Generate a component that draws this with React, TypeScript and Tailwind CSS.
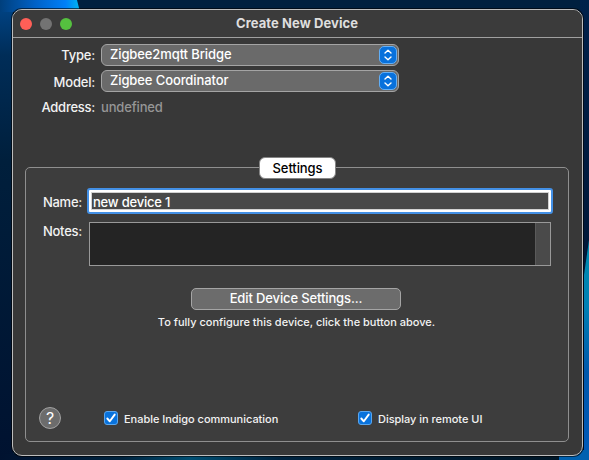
import React from 'react';

function Wallpaper() {
  return (
    <svg className="absolute inset-0" width="589" height="460" viewBox="0 0 589 460" aria-hidden="true">
      <defs>
        <linearGradient id="left" x1="0" y1="0" x2="0" y2="1">
          <stop offset="0" stopColor="#00468a" />
          <stop offset="0.12" stopColor="#002d58" />
          <stop offset="0.35" stopColor="#001f3c" />
          <stop offset="1" stopColor="#001230" />
        </linearGradient>
        <linearGradient id="top" x1="0" y1="0" x2="1" y2="0">
          <stop offset="0" stopColor="#003f7c" />
          <stop offset="0.45" stopColor="#0062c8" />
          <stop offset="0.82" stopColor="#0080f8" />
          <stop offset="1" stopColor="#00b8f0" />
        </linearGradient>
        <linearGradient id="right" x1="0" y1="0" x2="0" y2="1">
          <stop offset="0" stopColor="#00214b" />
          <stop offset="0.6" stopColor="#001737" />
          <stop offset="1" stopColor="#001230" />
        </linearGradient>
        <linearGradient id="wave" x1="0" y1="0" x2="0" y2="1">
          <stop offset="0" stopColor="#008cae" />
          <stop offset="0.3" stopColor="#0080b4" />
          <stop offset="0.6" stopColor="#0058ac" />
          <stop offset="1" stopColor="#0059b8" />
        </linearGradient>
        <linearGradient id="bottom" x1="0" y1="0" x2="1" y2="0">
          <stop offset="0" stopColor="#001230" />
          <stop offset="0.22" stopColor="#00243f" />
          <stop offset="0.34" stopColor="#004f73" />
          <stop offset="0.5" stopColor="#002440" />
          <stop offset="1" stopColor="#001728" />
        </linearGradient>
      </defs>
      <rect width="589" height="460" fill="#00203f" />
      <rect width="13" height="460" fill="url(#left)" />
      <rect x="80" width="509" height="12" fill="#00203f" />
      <path d="M0 0H77L80 12H0Z" fill="url(#top)" />
      <rect x="580" width="9" height="460" fill="url(#right)" />
      <path d="M589 240L584 275V460H589Z" fill="url(#wave)" />
      <rect y="454" width="560" height="6" fill="url(#bottom)" />
      <path d="M559 460V450H589V460Z" fill="#0061b0" />
    </svg>
  );
}

function Select({ value }: { value: string }) {
  return (
    <button className="flex h-[22px] w-[298px] items-center justify-between rounded-[6px] border border-[#a4a4a4] bg-[#6a6a6a] pr-px pl-2 text-left text-white">
      <span className="-mt-0.5 tracking-[-0.1px]">{value}</span>
      <span className="flex h-[18px] w-[18px] items-center justify-center rounded-[5px] border border-[#62aef5] bg-[#0871dc]">
        <svg width="10" height="12" viewBox="0 0 10 12" fill="none" stroke="white" strokeWidth="1.4" strokeLinecap="round" strokeLinejoin="round">
          <path d="M2 4L5 1.2L8 4M2 8L5 10.8L8 8" />
        </svg>
      </span>
    </button>
  );
}

function Check({ label, className }: { label: string; className: string }) {
  return (
    <label className={'flex items-center gap-1.5 text-[11px] whitespace-nowrap ' + className}>
      <span className="flex h-[14px] w-[14px] items-center justify-center rounded-[3px] border border-[#5aa6ee] bg-[#0872dc]">
        <svg width="12" height="12" viewBox="0 0 12 12" fill="none" stroke="white" strokeWidth="1.9" strokeLinecap="round" strokeLinejoin="round">
          <path d="M2.3 6.5L4.8 9.3L9.7 2.6" />
        </svg>
      </span>
      <span className="pt-0.5 tracking-[-0.03px]">{label}</span>
    </label>
  );
}

export default function App() {
  return (
    <div className="relative h-[460px] w-[589px] overflow-hidden pt-[9px] pl-[12px] font-['Inter','Liberation_Sans',sans-serif] text-[13px] leading-[16px] font-medium text-[#f2f2f2]">
      <Wallpaper />
      <main className="relative h-[447px] w-[571px] rounded-[10px] border border-[#bdbdbd] bg-[#383838] shadow-[0_0_0_1px_#00000099]">
        <header className="flex h-[28px] items-center rounded-t-[9px] border-b border-[#a0a0a0] bg-[#3b3b3b] pl-[7px]">
          <div className="flex w-[216px] gap-2">
            <i className="h-3 w-3 rounded-full bg-[#ff5f57]" />
            <i className="h-3 w-3 rounded-full bg-[#737373]" />
            <i className="h-3 w-3 rounded-full bg-[#55c13f]" />
          </div>
          <h1 className="-mt-px text-[13px] font-bold tracking-[0.08px] text-[#dedede]">Create New Device</h1>
        </header>

        <section className="flex h-[129px] flex-col pt-[6px]">
          <div className="flex h-[26px] items-start">
            <span className="mt-[3px] mr-[6px] w-[82px] text-right tracking-[-0.2px]">Type:</span>
            <Select value="Zigbee2mqtt Bridge" />
          </div>
          <div className="flex h-[26px] items-start">
            <span className="mt-[4px] mr-[6px] w-[82px] text-right tracking-[-0.2px]">Model:</span>
            <Select value="Zigbee Coordinator" />
          </div>
          <div className="mt-[3px] flex h-4">
            <span className="mr-[6px] w-[82px] text-right tracking-[-0.25px]">Address:</span>
            <span className="tracking-[-0.15px] text-[#969696]">undefined</span>
          </div>
        </section>

        <section className="ml-[12px] h-[275px] w-[544px] rounded-[5px] border border-[#8f8f8f] bg-[#3d3d3d]">
          <div className="-mt-[11px] ml-[233px] flex h-[22px] w-[77px] items-center justify-center rounded-[6px] border border-[#858585] bg-white text-black">
            <span className="-mt-px tracking-[-0.1px]">Settings</span>
          </div>
          <div className="mt-[9px] flex">
            <span className="mt-[6px] mr-[5px] w-[56px] text-right tracking-[-0.25px]">Name:</span>
            <div className="h-[26px] w-[466px] rounded-[3px] border-2 border-[#4390e6] bg-white p-[2px]">
              <div className="h-[18px] w-[458px] border border-[#d1d1d1] bg-[#484848] pl-px leading-[18px] tracking-[-0.2px] text-white">new device 1</div>
            </div>
          </div>
          <div className="mt-[8px] flex">
            <span className="mt-px mr-[7px] w-[56px] text-right tracking-[-0.25px]">Notes:</span>
            <div className="flex h-[44px] w-[462px] justify-end border border-[#999] bg-[#242424]">
              <div className="w-[15px] border-l border-[#5a5a5a] bg-[#4a4a4a]" />
            </div>
          </div>
          <button className="mt-[22px] ml-[165px] flex h-[22px] w-[210px] items-center justify-center rounded-[5px] border border-[#a5a5a5] bg-[#6c6c6c] text-white">
            <span className="-mt-0.5 tracking-[-0.13px]">Edit Device Settings...</span>
          </button>
          <p className="mt-[4px] ml-[-1px] text-center text-[11px]">To fully configure this device, click the button above.</p>
          <div className="mt-[77px] flex h-[22px] items-center pl-[13px]">
            <button className="flex h-[22px] w-[22px] items-center justify-center rounded-full border border-[#a2a2a2] bg-[#6c6c6c] text-[16px] font-normal text-white">?</button>
            <Check label="Enable Indigo communication" className="ml-[43px] w-[254px]" />
            <Check label="Display in remote UI" className="" />
          </div>
        </section>
      </main>
    </div>
  );
}
